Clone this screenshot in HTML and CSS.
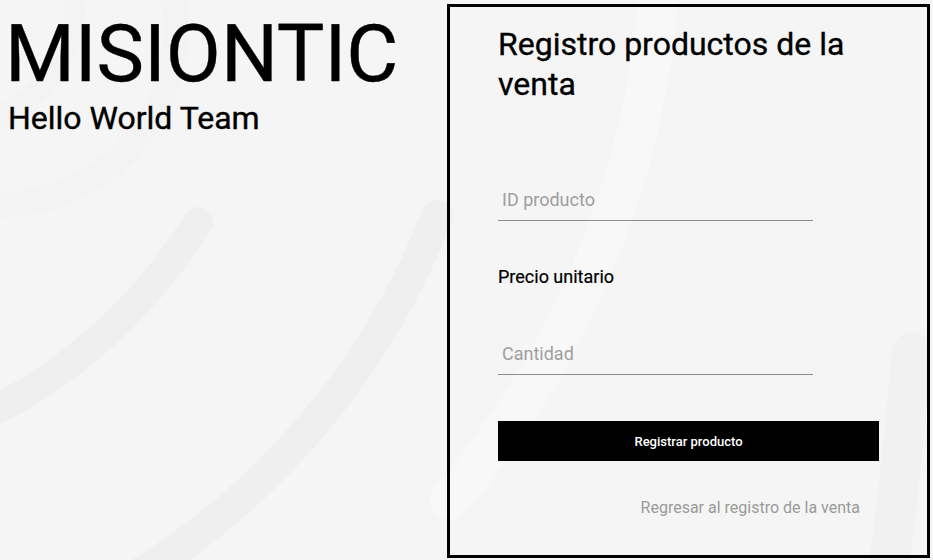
FILE: index.html
```html
<!DOCTYPE html>
<html lang="es">
<head>
<meta charset="utf-8">
<title>MISIONTIC - Registro productos</title>
<link rel="stylesheet" href="styles.css">
</head>
<body>
<div class="page">
  <svg class="bg" width="933" height="560" viewBox="0 0 933 560" aria-hidden="true">
    <g fill="none" stroke-linecap="round">
      <path class="arc-faint" d="M 172 -10 A 178 178 0 0 1 -10 205" stroke-width="26"/>
      <path class="arc-faint" d="M 75 -10 A 125 125 0 0 1 -10 120" stroke-width="22"/>
      <path class="arc-light" d="M 660 -20 A 890 890 0 0 1 450 500" stroke-width="40"/>
      <path class="arc" d="M 198 222 A 520 520 0 0 1 -20 418" stroke-width="30"/>
      <path class="arc" d="M 437 216 A 736 736 0 0 1 130 580" stroke-width="32"/>
      <path class="arc-soft" d="M 912 352 Q 902 470 886 590" stroke-width="40"/>
    </g>
  </svg>
  <header class="brand">
    <h1 class="brand-title">MISIONTIC</h1>
    <p class="brand-sub">Hello World Team</p>
  </header>
  <main class="card">
    <h2 class="card-title">Registro productos de la venta</h2>
    <input class="field field-first" type="text" placeholder="ID producto">
    <div class="label">Precio unitario</div>
    <input class="field field-qty" type="text" placeholder="Cantidad">
    <button class="btn" type="button">Registrar producto</button>
    <a class="back" href="#">Regresar al registro de la venta</a>
  </main>
</div>
</body>
</html>
```
FILE: styles.css
```css
* { box-sizing: border-box; }

html, body {
  margin: 0;
  padding: 0;
  height: 100%;
}

body {
  background: #f5f5f5;
  font-family: Roboto, "Liberation Sans", Arial, sans-serif;
  color: #000;
  overflow: hidden;
}

.page {
  position: relative;
  display: flex;
  width: 933px;
  height: 560px;
  padding: 4px 3px 2px 0;
}

.bg {
  position: absolute;
  left: 0;
  top: 0;
  z-index: 0;
}

.arc { stroke: #efefef; }
.arc-soft { stroke: #f1f1f1; }
.arc-faint { stroke: #f3f3f3; }
.arc-light { stroke: #f8f8f8; }

.brand {
  position: relative;
  z-index: 1;
  flex: 1;
  padding-left: 5px;
}

.brand-title {
  margin: 10px 0 0;
  font-size: 80px;
  font-weight: 400;
  line-height: 80px;
  -webkit-text-stroke: 0.4px #000;
}

.brand-sub {
  margin: 6px 0 0 3px;
  font-size: 32px;
  line-height: 37px;
  -webkit-text-stroke: 0.4px #000;
}

.card {
  position: relative;
  z-index: 1;
  width: 483px;
  height: 554px;
  border: 3px solid #000;
  padding: 17px 48px 0;
  display: flex;
  flex-direction: column;
  align-items: flex-start;
}

.card-title {
  margin: 0;
  font-size: 32px;
  font-weight: 400;
  line-height: 40px;
  -webkit-text-stroke: 0.35px #000;
}

.field {
  display: block;
  width: 315px;
  height: 37px;
  padding: 0 4px 6px;
  border: 0;
  border-bottom: 1px solid #8c8c8c;
  background: transparent;
  font-family: inherit;
  font-size: 18px;
  color: #000;
  outline: none;
}

.field::placeholder { color: #9e9e9e; }

.field-first { margin-top: 80px; }

.label {
  margin-top: 45px;
  font-size: 18px;
  line-height: 21px;
  -webkit-text-stroke: 0.2px #000;
}

.field-qty { margin-top: 51px; }

.btn {
  margin-top: 46px;
  width: 381px;
  height: 40px;
  border: 0;
  background: #000;
  color: #fff;
  font-family: inherit;
  font-size: 13px;
  font-weight: 500;
  cursor: pointer;
}

.back {
  align-self: flex-end;
  margin: 37px 19px 0 0;
  font-size: 16px;
  line-height: 19px;
  color: #9a9a9a;
  text-decoration: none;
}
```
